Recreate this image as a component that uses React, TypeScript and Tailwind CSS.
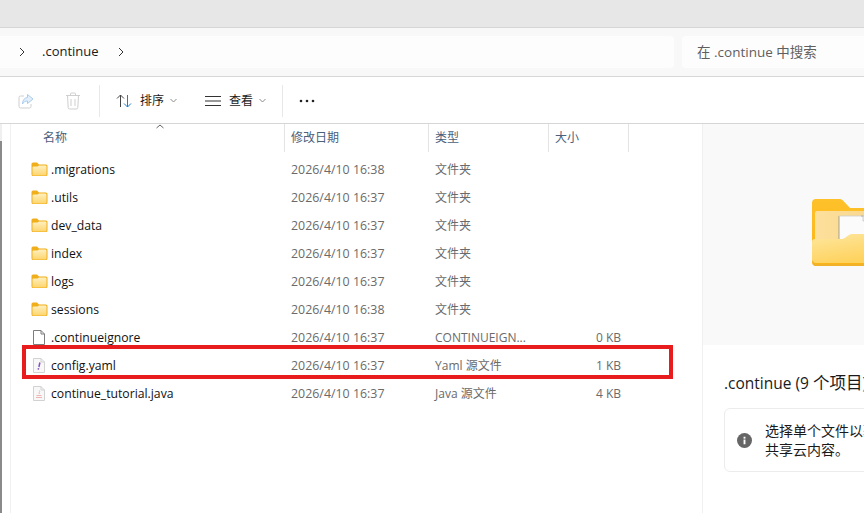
import React from "react";

const font = { fontFamily: '"Open Sans", "Noto Sans CJK SC", sans-serif' };

function FolderIcon({ id }: { id: string }) {
  return (
    <svg width="17" height="15" viewBox="0 0 17 15" className="shrink-0">
      <defs>
        <linearGradient id={id} x1="0" y1="0" x2="0" y2="1">
          <stop offset="0" stopColor="#fff0c0" />
          <stop offset="1" stopColor="#fdd56e" />
        </linearGradient>
      </defs>
      <path d="M0.500 2a1.500 1.500 0 0 1 1.500-1.500h4l2 2h7a1.500 1.500 0 0 1 1.500 1.500v8.500a1.500 1.500 0 0 1-1.500 1.500H2A1.500 1.500 0 0 1 .5 12.500z" fill="#f0ae1a" />
      <path d="M1.500 5.500a1 1 0 0 1 1-1H6.500l1.500-1H14.500a1 1 0 0 1 1 1v8a1 1 0 0 1-1 1H2.500a1 1 0 0 1-1-1z" fill={`url(#${id})`} />
    </svg>
  );
}

function DocIcon({ kind }: { kind: "blank" | "yaml" | "java" }) {
  const stroke = kind === "blank" ? "#7d7d7d" : "#d2d2d2";
  const fill = kind === "blank" ? "#ffffff" : "#f8f8f8";
  return (
    <svg width="12" height="15" viewBox="0 0 12 15" className="ml-[2px] shrink-0">
      <path d="M.5.500h7.500l3.500 3.500v10.500h-11z" fill={fill} stroke={stroke} />
      <path d="M8 .5v3.500h3.500" fill="none" stroke={stroke} />
      {kind === "yaml" && <path d="M6.900 4.500l-1 4.500M5.500 10.200l-.2 1.500" stroke="#8450c4" strokeWidth="1.500" fill="none" />}
      {kind === "java" && <path d="M6.500 4.500c1 1.500-1.500 2 0 3.500M3.500 9.500h5M3 11.500h6" stroke="#eeb4b4" strokeWidth="1" fill="none" />}
    </svg>
  );
}

const rows = [
  { name: ".migrations", date: "2026/4/10 16:38", type: "文件夹", size: "", icon: "folder" },
  { name: ".utils", date: "2026/4/10 16:37", type: "文件夹", size: "", icon: "folder" },
  { name: "dev_data", date: "2026/4/10 16:37", type: "文件夹", size: "", icon: "folder" },
  { name: "index", date: "2026/4/10 16:37", type: "文件夹", size: "", icon: "folder" },
  { name: "logs", date: "2026/4/10 16:37", type: "文件夹", size: "", icon: "folder" },
  { name: "sessions", date: "2026/4/10 16:38", type: "文件夹", size: "", icon: "folder" },
  { name: ".continueignore", date: "2026/4/10 16:37", type: "CONTINUEIGN...", size: "0 KB", icon: "blank" },
  { name: "config.yaml", date: "2026/4/10 16:37", type: "Yaml 源文件", size: "1 KB", icon: "yaml" },
  { name: "continue_tutorial.java", date: "2026/4/10 16:37", type: "Java 源文件", size: "4 KB", icon: "java" },
] as const;

function Chevron() {
  return (
    <svg width="8" height="10" viewBox="0 0 8 10">
      <path d="M2 1l4 4-4 4" fill="none" stroke="#333" strokeWidth="1" />
    </svg>
  );
}

function SmallDown() {
  return (
    <svg width="7" height="5" viewBox="0 0 7 5">
      <path d="M.5 1l3 3 3-3" fill="none" stroke="#8a8a8a" strokeWidth="1" />
    </svg>
  );
}

export default function App() {
  return (
    <div style={font} className="relative flex h-[513px] w-[864px] flex-col overflow-hidden bg-white text-[12px] text-[#1a1a1a]">
      <div className="h-[28px] shrink-0 border-b border-[#d6d6d6] bg-[#e7e7e7]" />
      <div className="flex h-[49px] shrink-0 items-center gap-2 border-b border-[#d6d6d6] bg-[#f8f8f8]">
        <div className="flex h-[32px] w-[674px] items-center rounded-r-[4px] bg-[#fdfdfd] pl-[18px] text-[13px]">
          <Chevron />
          <span className="ml-[16px]">.continue</span>
          <span className="ml-[18px]"><Chevron /></span>
        </div>
        <div className="flex h-[32px] flex-1 items-center rounded-l-[4px] bg-[#fdfdfd] pl-[15px] text-[13.500px] text-[#5f5f5f]">
          在 .continue 中搜索
        </div>
      </div>
      <div className="flex h-[47px] shrink-0 items-center border-b border-[#d6d6d6] pt-[1px]">
        <svg width="16" height="16" viewBox="0 0 16 16" className="ml-[18px]">
          <path d="M6 3H2.500A1.500 1.500 0 0 0 1 4.500v9A1.500 1.500 0 0 0 2.500 15h9a1.500 1.500 0 0 0 1.500-1.500V11" fill="none" stroke="#cfcfcf" />
          <path d="M9.500 1.500L15 6l-5.500 4.500V8C7 8 5.500 9 4.500 11c0-4 2-6 5-6.500z" fill="#e3effa" stroke="#a9cdee" />
        </svg>
        <svg width="16" height="18" viewBox="0 0 16 18" className="ml-[31px]">
          <path d="M1 3.500h14M5.500 3.500V2a1 1 0 0 1 1-1h3a1 1 0 0 1 1 1v1.500M2.500 3.500l.7 12a1.500 1.500 0 0 0 1.500 1.500h6.600a1.500 1.500 0 0 0 1.500-1.500l.7-12M6 7v7M10 7v7" fill="none" stroke="#cfcfcf" />
        </svg>
        <div className="ml-[18px] h-[32px] w-px bg-[#e8e8e8]" />
        <svg width="16" height="14" viewBox="0 0 16 14" className="ml-[16px]">
          <path d="M4.500 13V1M1 4.500l3.500-3.500 3.500 3.500" fill="none" stroke="#444" />
          <path d="M11.500 1v12M8 9.500l3.500 3.500 3.500-3.500" fill="none" stroke="#1a7fd0" />
        </svg>
        <span className="ml-[8px]">排序</span>
        <span className="ml-[6px] flex"><SmallDown /></span>
        <svg width="16" height="12" viewBox="0 0 16 12" className="ml-[28px]">
          <path d="M0 1.500h16M0 6h16M0 10.500h16" stroke="#333" fill="none" />
        </svg>
        <span className="ml-[8px]">查看</span>
        <span className="ml-[6px] flex"><SmallDown /></span>
        <div className="ml-[16px] h-[32px] w-px bg-[#e8e8e8]" />
        <svg width="16" height="4" viewBox="0 0 16 4" className="ml-[16px]">
          <circle cx="2" cy="2" r="1.300" fill="#222" /><circle cx="8" cy="2" r="1.300" fill="#222" /><circle cx="14" cy="2" r="1.300" fill="#222" />
        </svg>
      </div>
      <div className="flex min-h-0 flex-1">
        <div className="flex w-[2px] shrink-0 flex-col">
          <div className="h-[17px] bg-[#efefef]" />
          <div className="flex-1 bg-[#8a8a8a]" />
        </div>
        <div className="w-[9px] shrink-0 border-r border-[#f0f0f0]" />
        <div className="relative w-[691px] shrink-0">
          <div className="flex h-[28px] text-[#4c607a]">
            <div className="flex w-[274px] items-center border-r border-[#e3e3e3] pl-[32px]">名称</div>
            <div className="flex w-[144px] items-center border-r border-[#e3e3e3] pl-[6px]">修改日期</div>
            <div className="flex w-[120px] items-center border-r border-[#e3e3e3] pl-[6px]">类型</div>
            <div className="flex w-[80px] items-center border-r border-[#e3e3e3] pl-[6px]">大小</div>
          </div>
          <svg width="8" height="5" viewBox="0 0 8 5" className="absolute left-[145px] top-[0px]">
            <path d="M.5 4l3.500-3 3.500 3" fill="none" stroke="#666" />
          </svg>
          <div className="pt-[4px]">
            {rows.map((r, i) => (
              <div key={r.name} className="flex h-[28px] items-center">
                <div className="flex w-[273px] items-center pl-[20px]">
                  <span className="flex w-[20px] shrink-0 items-center">
                    {r.icon === "folder" ? <FolderIcon id={`folder-fill-${i}`} /> : <DocIcon kind={r.icon} />}
                  </span>
                  <span className="whitespace-nowrap text-[12.200px] text-[#111]">{r.name}</span>
                </div>
                <div className="w-[145px] pl-[7px] text-[12.400px] text-[#6a6a6a]">{r.date}</div>
                <div className="w-[120px] whitespace-nowrap pl-[6px] text-[#6a6a6a]">{r.type}</div>
                <div className="w-[72px] text-right text-[#6a6a6a]">{r.size}</div>
              </div>
            ))}
          </div>
        </div>
        <div className="flex min-w-0 flex-1 flex-col border-l border-[#f0f0f0]">
          <div className="flex h-[221px] shrink-0 items-center overflow-hidden bg-[#f9f9f9] pb-[4px] pl-[109px]">
            <svg width="70" height="67" viewBox="0 0 70 67" className="shrink-0">
              <defs>
                <linearGradient id="bigTop" x1="0" y1="0" x2="0" y2="1">
                  <stop offset="0" stopColor="#fec12a" />
                  <stop offset="1" stopColor="#fbb416" />
                </linearGradient>
                <linearGradient id="bigBack" x1="0" y1="0" x2="1" y2="0">
                  <stop offset="0" stopColor="#fde09c" />
                  <stop offset="1" stopColor="#f8d68c" />
                </linearGradient>
                <linearGradient id="bigFront" x1="0" y1="0" x2="0.400" y2="1">
                  <stop offset="0" stopColor="#fee79f" />
                  <stop offset="1" stopColor="#fed25e" />
                </linearGradient>
              </defs>
              <path d="M0 4a4 4 0 0 1 4-4h24a4 4 0 0 1 3 1.500L38 9h32v58H4a4 4 0 0 1-4-4z" fill="url(#bigTop)" />
              <path d="M3 14a2 2 0 0 1 2-2h65v32H3z" fill="url(#bigBack)" />
              <path d="M27 17h43v28H27z" fill="#fbfbfb" />
              <path d="M27 17v24" stroke="#8e8e8e" strokeWidth="0.800" />
              <path d="M27 17h43" stroke="#cfcfcf" strokeWidth="0.800" />
              <path d="M49 17h2v5h6v-5z" fill="#f0f0f0" stroke="#b5b5b5" strokeWidth="0.600" />
              <path d="M0 43a3 3 0 0 1 3-3h26c2 0 3-.5 5-2l3-2c1-.8 2-1 3-1h30v29H4a4 4 0 0 1-4-4z" fill="url(#bigFront)" />
              <path d="M1 62a4 4 0 0 0 3 3h66v2H4a4 4 0 0 1-3-5z" fill="#f2b12a" />
            </svg>
          </div>
          <div className="min-w-0 pl-[21px] pt-[28px]">
            <div className="whitespace-nowrap text-[15.500px] leading-[20px] text-[#1a1a1a]">.continue (9 <span className="text-[16.500px]">个项目</span>)</div>
            <div className="mt-[15px] flex h-[64px] w-[200px] items-center whitespace-nowrap rounded-l-[6px] border border-[#ececec] pl-[12px] text-[14px] leading-[19px]">
              <svg width="15" height="15" viewBox="0 0 16 16" className="mr-[13px] shrink-0">
                <circle cx="8" cy="8" r="8" fill="#666" />
                <rect x="7" y="7" width="2" height="5" fill="#fff" />
                <rect x="7" y="4" width="2" height="2" fill="#fff" />
              </svg>
              <div>选择单个文件以获取<br />共享云内容。</div>
            </div>
          </div>
        </div>
      </div>
      <div className="absolute left-[22px] top-[345px] h-[34px] w-[651px] border-[4px] border-[#e81c1c]" />
    </div>
  );
}
